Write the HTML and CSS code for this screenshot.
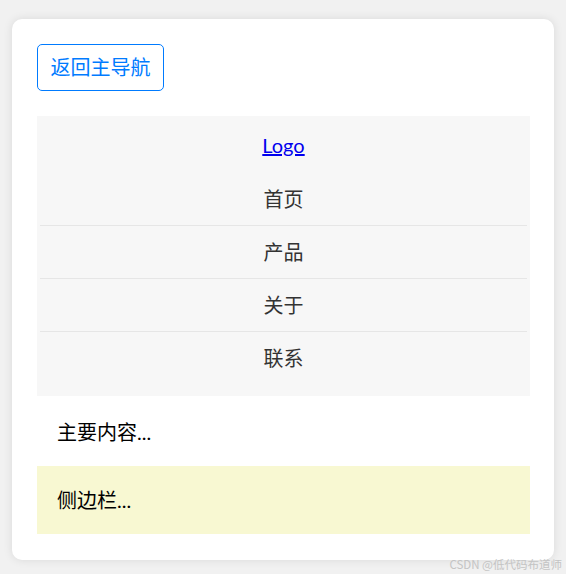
FILE: index.html
```html
<!DOCTYPE html>
<html lang="zh-CN">
<head>
<meta charset="utf-8">
<title>Layout</title>
<link rel="stylesheet" href="styles.css">
</head>
<body>
<div class="card">
  <button class="back-btn" type="button">返回主导航</button>
  <nav class="nav">
    <div class="logo"><a href="#">Logo</a></div>
    <ul class="menu">
      <li>首页</li>
      <li>产品</li>
      <li>关于</li>
      <li>联系</li>
    </ul>
  </nav>
  <main class="main">主要内容...</main>
  <aside class="sidebar">侧边栏...</aside>
</div>
<div class="watermark">CSDN @低代码布道师</div>
</body>
</html>
```

FILE: styles.css
```css
html, body {
  margin: 0;
  padding: 0;
}
body {
  background: #f1f1f1;
  font-family: Lato, "Noto Sans CJK SC", sans-serif;
  font-size: 20px;
  color: #000;
  padding: 19px 12px 14px;
  height: 574px;
  box-sizing: border-box;
  position: relative;
}
.card {
  background: #fff;
  border-radius: 10px;
  box-shadow: 0 0 10px rgba(0, 0, 0, 0.1);
  padding: 25px 24px 26px 25px;
  height: 541px;
  box-sizing: border-box;
  display: flex;
  flex-direction: column;
  align-items: stretch;
}
.back-btn {
  align-self: flex-start;
  font-family: Lato, "Noto Sans CJK SC", sans-serif;
  font-size: 20px;
  line-height: 25px;
  padding: 10px 12.5px;
  border: 1px solid #007bff;
  border-radius: 5px;
  background: #fff;
  color: #007bff;
  margin: 0 0 25px;
}
.nav {
  background: #f7f7f7;
  padding: 12px 3px;
}
.logo {
  text-align: center;
  line-height: 34px;
  margin-bottom: 11px;
}
.logo a {
  color: #0000ee;
  text-decoration: underline;
}
.menu {
  list-style: none;
  margin: 0;
  padding: 0;
}
.menu li {
  text-align: center;
  color: #333;
  padding: 13px 0;
  line-height: 26px;
  border-bottom: 1px solid #e6e6e6;
}
.menu li:last-child {
  border-bottom: none;
}
.main {
  padding: 21px 20px 19px;
  line-height: 30px;
}
.sidebar {
  background: #f8f8d2;
  padding: 20px;
  line-height: 28px;
}
.watermark {
  position: absolute;
  right: 4px;
  bottom: 2px;
  font-family: "Noto Sans CJK SC", sans-serif;
  font-size: 11.5px;
  color: #c4c4c4;
  line-height: 16px;
}
```
